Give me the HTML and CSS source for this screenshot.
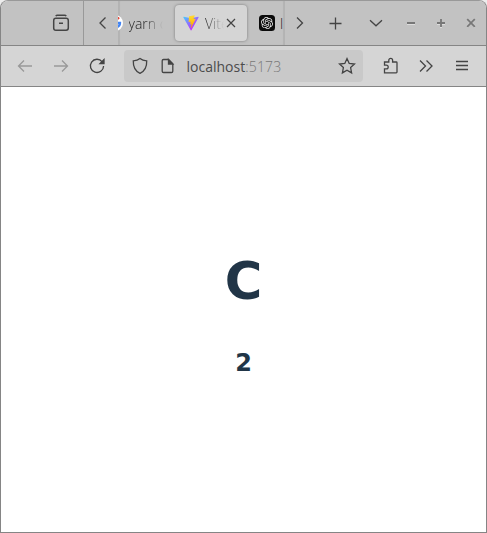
FILE: index.html
```html
<!DOCTYPE html>
<html lang="en">
<head>
<meta charset="utf-8">
<title>Vite</title>
<link rel="stylesheet" href="styles.css">
</head>
<body>
<div class="window">
  <header class="tabbar">
    <div class="cell recent"><svg width="20" height="20" viewBox="0 0 20 20"><path d="M4.800 3.200q.5-.9 1.600-.9h7.200q1.100 0 1.600.9"/><rect x="2.700" y="5.300" width="14.600" height="12" rx="2.200"/><path d="M8 10.200h4"/></svg></div>
    <div class="cell"><svg width="20" height="20" viewBox="0 0 20 20"><path d="M14.500 4.500 9 10l5.500 5.500"/></svg></div>
    <div class="tabs">
      <div class="tab first">
        <svg class="logo" width="16" height="16" viewBox="0 0 16 16"><circle cx="8" cy="8" r="8" fill="#fff"/><path d="M3.800 5A5 5 0 0 1 12 4" fill="none" stroke="#e74335" stroke-width="2.200"/><path d="M3.800 5a5 5 0 0 0 0 6" fill="none" stroke="#fbbc05" stroke-width="2.200"/><path d="M3.800 11a5 5 0 0 0 5 1.800" fill="none" stroke="#34a853" stroke-width="2.200"/><path d="M8 8h5q0 3-3.500 4.600" fill="none" stroke="#4285f4" stroke-width="2.300"/></svg>
        <span class="label yarn">yarn c</span>
      </div>
      <div class="tab active">
        <svg class="logo" width="16" height="16" viewBox="0 0 410 404"><defs><linearGradient id="a" x1="6" y1="33" x2="235" y2="344" gradientUnits="userSpaceOnUse"><stop stop-color="#41d1ff"/><stop offset="1" stop-color="#bd34fe"/></linearGradient><linearGradient id="b" x1="194" y1="9" x2="236" y2="293" gradientUnits="userSpaceOnUse"><stop stop-color="#ffdd35"/><stop offset="1" stop-color="#ffa800"/></linearGradient></defs><path fill="url(#a)" d="M399.600 59.500 215.600 388.500c-3.800 6.800-13.600 6.800-17.400.1L10.600 59.600c-4.200-7.300 2.100-16.200 10.400-14.700l184.200 32.900 4.200 0 180-32.800c8.300-1.500 14.600 7.200 10.200 14.500Z"/><path fill="url(#b)" d="M293 1.600 156.800 28.200c-2.200.4-3.900 2.300-4 4.600l-8.400 141.500c-.2 3.300 2.900 5.900 6.100 5.200l37.900-8.800c3.600-.8 6.800 2.300 6 5.900l-11.200 55.100c-.8 3.800 2.700 6.900 6.400 5.800l23.400-7.100c3.700-1.100 7.200 2.100 6.400 5.800l-17.900 86.700c-1.100 5.400 6.100 8.400 9.100 3.700l2-3.100 111-221.600c1.900-3.700-1.400-7.900-5.400-7.100l-39.100 7.500c-3.700.7-6.800-2.700-5.800-6.300L299 7.900c1-3.700-2.200-7-6-6.300Z"/></svg>
        <span class="label vite">Vite</span>
        <svg class="close" width="12" height="12" viewBox="0 0 12 12"><path d="m2 2 8 8M10 2l-8 8"/></svg>
      </div>
      <div class="tab last">
        <svg class="logo" width="16" height="16" viewBox="0 0 16 16"><rect width="16" height="16" rx="3.500" fill="#0b0b0b"/><path transform="translate(2 2) scale(.5)" fill="#eee" d="M22.2819 9.8211a5.9847 5.9847 0 0 0-.5157-4.9108 6.0462 6.0462 0 0 0-6.5098-2.9A6.0651 6.0651 0 0 0 4.9807 4.1818a5.9847 5.9847 0 0 0-3.9977 2.9 6.0462 6.0462 0 0 0 .7427 7.0966 5.98 5.98 0 0 0 .511 4.9107 6.051 6.051 0 0 0 6.5146 2.9001A5.9847 5.9847 0 0 0 13.2599 24a6.0557 6.0557 0 0 0 5.7718-4.2058 5.9894 5.9894 0 0 0 3.9977-2.9001 6.0557 6.0557 0 0 0-.7475-7.073zm-9.022 12.6081a4.4755 4.4755 0 0 1-2.8764-1.0408l.1419-.0804 4.7783-2.7582a.7948.7948 0 0 0 .3927-.6813v-6.7369l2.02 1.1686a.071.071 0 0 1 .038.052v5.5826a4.504 4.504 0 0 1-4.4945 4.4944zm-9.6607-4.1254a4.4708 4.4708 0 0 1-.5346-3.0137l.142.0852 4.783 2.7582a.7712.7712 0 0 0 .7806 0l5.8428-3.3685v2.3324a.0804.0804 0 0 1-.0332.0615L9.74 19.9502a4.4992 4.4992 0 0 1-6.1408-1.6464zM2.3408 7.8956a4.485 4.485 0 0 1 2.3655-1.9728V11.6a.7664.7664 0 0 0 .3879.6765l5.8144 3.3543-2.0201 1.1685a.0757.0757 0 0 1-.071 0l-4.8303-2.7865A4.504 4.504 0 0 1 2.3408 7.872zm16.5963 3.8558L13.1038 8.364 15.1192 7.2a.0757.0757 0 0 1 .071 0l4.8303 2.7913a4.4944 4.4944 0 0 1-.6765 8.1042v-5.6772a.79.79 0 0 0-.407-.667zm2.0107-3.0231l-.142-.0852-4.7735-2.7818a.7759.7759 0 0 0-.7854 0L9.409 9.2297V6.8974a.0662.0662 0 0 1 .0284-.0615l4.8303-2.7866a4.4992 4.4992 0 0 1 6.6802 4.66zM8.3065 12.863l-2.02-1.1638a.0804.0804 0 0 1-.038-.0567V6.0742a4.4992 4.4992 0 0 1 7.3757-3.4537l-.142.0805L8.704 5.459a.7948.7948 0 0 0-.3927.6813zm1.0976-2.3654l2.602-1.4998 2.6069 1.4998v2.9994l-2.5974 1.4997-2.6067-1.4997Z"/></svg>
        <span class="label">l</span>
      </div>
    </div>
    <div class="cell"><svg width="20" height="20" viewBox="0 0 20 20"><path d="M5 4.500 10.500 10 5 15.500"/></svg></div>
    <div class="cell"><svg width="20" height="20" viewBox="0 0 20 20"><path d="M9.500 4.500v12M3.500 10.500h12"/></svg></div>
    <div class="cell"><svg width="20" height="20" viewBox="0 0 20 20"><path d="m5 7.200 6 5.600 6-5.600"/></svg></div>
    <div class="cell control"><svg width="12" height="12" viewBox="0 0 12 12"><path class="light" d="M2 7.500h8"/><path d="M2 6h8"/></svg></div>
    <div class="cell control"><svg width="12" height="12" viewBox="0 0 12 12"><path class="light" d="M2 7.500h8M5 10.500h2"/><path d="M2 6h8M6 2v8"/></svg></div>
    <div class="cell control"><svg width="12" height="12" viewBox="0 0 12 12"><path class="light" d="m2.200 3.200 7.600 7.600m0-7.600-7.600 7.600"/><path d="m2.200 2.200 7.600 7.600m0-7.600-7.600 7.600"/></svg></div>
  </header>
  <nav class="toolbar">
    <div class="cell faded"><svg width="20" height="20" viewBox="0 0 20 20"><path d="M17 10H3.500M9 4.500 3.500 10 9 15.500"/></svg></div>
    <div class="cell faded"><svg width="20" height="20" viewBox="0 0 20 20"><path d="M3 10h13.500M11 4.500l5.500 5.500-5.500 5.500"/></svg></div>
    <div class="cell"><svg width="20" height="20" viewBox="0 0 20 20"><path d="M15.200 5.800A6.600 6.600 0 1 0 16.600 10"/><path class="solid" d="M17 3.500v4h-4Z"/></svg></div>
    <div class="address">
      <svg width="20" height="20" viewBox="0 0 20 20"><path d="M10 2.500c1.800 1.500 4 2.200 6.700 2.400.2 5.200-1.500 9.900-6.700 12.400C4.800 14.800 3.100 10.100 3.300 4.900 6 4.700 8.200 4 10 2.500Z"/></svg>
      <svg width="20" height="20" viewBox="0 0 20 20"><path d="M6 3.500h4.500l4.300 4.300v7.400q0 1.300-1.300 1.300H5.500q-1.300 0-1.300-1.300V4.800q0-1.300 1.300-1.300Z"/><path class="solid" d="M10.500 3.500V8h4.300Z"/></svg>
      <span class="url">localhost<span class="port">:5173</span></span>
      <svg class="star" width="20" height="20" viewBox="0 0 20 20"><path d="m10 2.500 2.200 4.900 5.300.6-3.900 3.600 1 5.300-4.600-2.700-4.600 2.700 1-5.300L2.500 8l5.300-.6Z"/></svg>
    </div>
    <div class="cell"><svg width="20" height="20" viewBox="0 0 20 20"><path d="M3.500 16.800V12.900h1.800a1.900 1.900 0 0 0 0-3.800H3.500V6h4.300V4.300a1.900 1.900 0 0 1 3.800 0V6h3.600q.8 0 .8.800v9.200q0 .8-.8.800Z"/></svg></div>
    <div class="cell"><svg width="20" height="20" viewBox="0 0 20 20"><path d="m4 4.500 5.500 5.500L4 15.500m6.500-11L16 10l-5.500 5.500"/></svg></div>
    <div class="cell"><svg width="20" height="20" viewBox="0 0 20 20"><path d="M5 5.500h12M5 9.500h12M5 13.500h12"/></svg></div>
  </nav>
  <main class="page">
    <h1>C</h1>
    <h2>2</h2>
  </main>
</div>
</body>
</html>
```

FILE: styles.css
```css
* { box-sizing: border-box; }
body { margin: 0; background: #ededed; font-family: "Open Sans", "Noto Sans", sans-serif; }
.window {
  display: grid;
  grid-template-rows: 45px 41px 1fr;
  width: 487px;
  height: 533px;
  border: 1px solid #858585;
  border-top-color: #999;
  border-radius: 8px 8px 0 0;
  overflow: hidden;
}
svg { display: block; flex: none; fill: none; stroke: #444; stroke-width: 1.3; }
svg.logo { stroke: none; }
.solid { fill: #444; }
.cell { display: flex; align-items: center; justify-content: center; }
.tabbar {
  display: grid;
  grid-template-columns: 83px 34px 167px 33px 36px 42px 30px 30px 30px;
  background: #c2c2c2;
  border-bottom: 1px solid #858585;
}
.recent { justify-content: flex-end; padding-right: 12px; border-right: 1px solid #999; }
.recent svg { stroke-width: 1.5; }
.tabs {
  display: flex;
  align-items: center;
  overflow: hidden;
  box-shadow: inset 2px 0 1px #b3b3b3, inset -2px 0 1px #b3b3b3;
}
.tab { display: flex; align-items: center; height: 36px; flex: none; }
.label { font-size: 14px; font-weight: 300; color: #222; white-space: nowrap; }
.first { width: 57px; }
.first .logo { margin-left: -11px; }
.yarn { width: 36px; margin-left: 5.5px; mask-image: linear-gradient(90deg, #000 40%, transparent 95%); }
.active {
  width: 72px;
  padding-left: 8px;
  border-radius: 4px;
  background: #d5d5d5;
  box-shadow: 0 0 3px #777;
}
.vite { width: 19px; margin-left: 6px; mask-image: linear-gradient(90deg, #000, transparent); }
.close { margin-left: 1px; stroke-width: 1.2; }
.last { margin-left: 12px; }
.last .label { margin-left: 5px; }
.control svg { stroke: #777; stroke-width: 1.8; }
.control .light { stroke: #ddd; stroke-width: 1; }
.toolbar {
  display: grid;
  grid-template-columns: 48px 24px 48px 245px 50px 20px 50px;
  align-items: center;
  background: #d5d5d5;
  border-bottom: 1px solid #858585;
}
.faded svg { stroke: #999; }
.address {
  display: flex;
  align-items: center;
  width: 239px;
  height: 32px;
  margin-left: 3px;
  padding: 0 6px;
  gap: 8px;
  border-radius: 4px;
  background: #c9c9c9;
}
.url { margin-left: .5px; font-size: 14px; color: #4c4c4c; }
.port { font-weight: 350; letter-spacing: .2px; color: #777; }
.star { margin-left: auto; }
.page {
  display: flex;
  flex-direction: column;
  align-items: center;
  background: #fff;
  color: #213547;
  font-family: "DejaVu Sans", sans-serif;
}
h1, h2 { margin: 0; font-weight: 700; }
h1 { margin-top: 166px; font-size: 51.2px; line-height: 56px; }
h2 { margin-top: 36px; font-size: 24px; line-height: 36px; }
```
